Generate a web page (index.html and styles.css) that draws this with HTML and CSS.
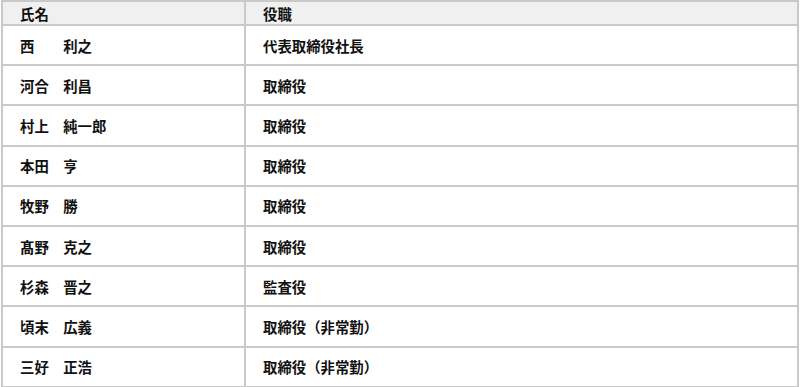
FILE: index.html
```html
<!DOCTYPE html>
<html lang="ja">
<head>
<meta charset="utf-8">
<link rel="stylesheet" href="styles.css">
</head>
<body>
<div class="wrap">
<table class="officers">
  <thead>
    <tr><th class="col-name">氏名</th><th class="col-role">役職</th></tr>
  </thead>
  <tbody>
    <tr><td>西　　利之</td><td>代表取締役社長</td></tr>
    <tr><td>河合　利昌</td><td>取締役</td></tr>
    <tr><td>村上　純一郎</td><td>取締役</td></tr>
    <tr><td>本田　亨</td><td>取締役</td></tr>
    <tr><td>牧野　勝</td><td>取締役</td></tr>
    <tr><td>髙野　克之</td><td>取締役</td></tr>
    <tr><td>杉森　晋之</td><td>監査役</td></tr>
    <tr><td>頃末　広義</td><td>取締役（非常勤）</td></tr>
    <tr><td>三好　正浩</td><td>取締役（非常勤）</td></tr>
  </tbody>
</table>
</div>
</body>
</html>
```

FILE: styles.css
```css
html, body {
  margin: 0;
  padding: 0;
  background: #ffffff;
}
.wrap {
  padding: 0 1px;
}
.officers {
  width: 798px;
  border-collapse: collapse;
  font-family: "Noto Sans CJK JP", "Noto Sans", sans-serif;
  font-size: 14.4px;
  font-weight: 700;
  color: #111111;
  table-layout: fixed;
}
.officers th,
.officers td {
  box-sizing: border-box;
  border: 2px solid #c9c9c9;
  text-align: left;
  padding: 0 0 0 17px;
  white-space: pre;
}
.officers th {
  background: #f0f0f0;
  height: 24px;
  line-height: 21px;
}
.officers td {
  height: 40.2px;
}
.col-name {
  width: 243px;
}
```
